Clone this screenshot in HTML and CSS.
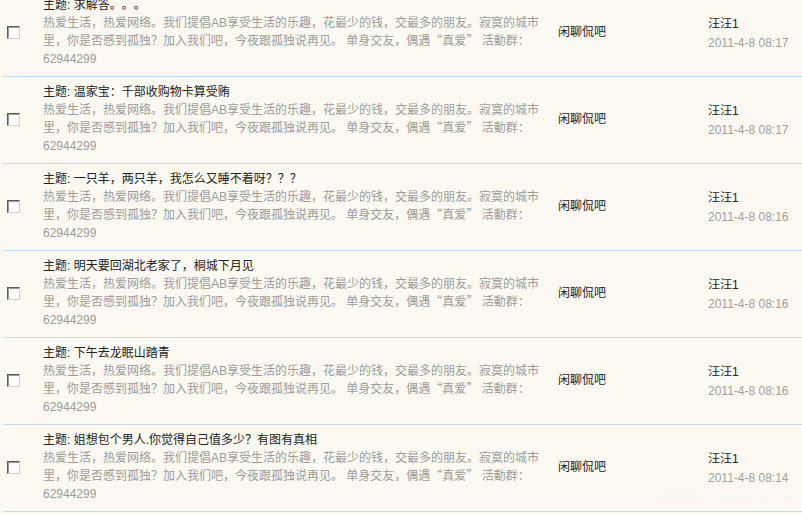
FILE: index.html
```html
<!DOCTYPE html>
<html lang="zh-CN">
<head>
  <meta charset="UTF-8" />
  <title>帖子列表</title>
  <link rel="stylesheet" href="styles.css">
</head>

<body>
  <div class="lista">
    <table class="tabla">
      <colgroup>
        <col class="c-check">
        <col class="c-tema">
        <col class="c-foro">
        <col class="c-autor">
      </colgroup>
      <tbody>
        <tr>
          <td class="sel"><input type="checkbox"></td>
          <td class="tema">
            <div class="titulo">主题: 求解答<span class="p">。</span><span class="p">。</span><span class="p">。</span></div>
            <div class="desc">热爱生活，热爱网络。我们提倡AB享受生活的乐趣，花最少的钱，交最多的朋友。寂寞的城市里，你是否感到孤独？加入我们吧，今夜跟孤独说再见。 单身交友，偶遇<span class="q">“</span>真爱<span class="q">”</span> 活動群：62944299</div>
          </td>
          <td class="foro">闲聊侃吧</td>
          <td class="autor"><div class="nombre">汪汪1</div><div class="fecha">2011-4-8 08:17</div></td>
        </tr>
        <tr>
          <td class="sel"><input type="checkbox"></td>
          <td class="tema">
            <div class="titulo">主题: 温家宝：千部收购物卡算受贿</div>
            <div class="desc">热爱生活，热爱网络。我们提倡AB享受生活的乐趣，花最少的钱，交最多的朋友。寂寞的城市里，你是否感到孤独？加入我们吧，今夜跟孤独说再见。 单身交友，偶遇<span class="q">“</span>真爱<span class="q">”</span> 活動群：62944299</div>
          </td>
          <td class="foro">闲聊侃吧</td>
          <td class="autor"><div class="nombre">汪汪1</div><div class="fecha">2011-4-8 08:17</div></td>
        </tr>
        <tr>
          <td class="sel"><input type="checkbox"></td>
          <td class="tema">
            <div class="titulo">主题: 一只羊，两只羊，我怎么又睡不着呀？？？</div>
            <div class="desc">热爱生活，热爱网络。我们提倡AB享受生活的乐趣，花最少的钱，交最多的朋友。寂寞的城市里，你是否感到孤独？加入我们吧，今夜跟孤独说再见。 单身交友，偶遇<span class="q">“</span>真爱<span class="q">”</span> 活動群：62944299</div>
          </td>
          <td class="foro">闲聊侃吧</td>
          <td class="autor"><div class="nombre">汪汪1</div><div class="fecha">2011-4-8 08:16</div></td>
        </tr>
        <tr>
          <td class="sel"><input type="checkbox"></td>
          <td class="tema">
            <div class="titulo">主题: 明天要回湖北老家了，桐城下月见</div>
            <div class="desc">热爱生活，热爱网络。我们提倡AB享受生活的乐趣，花最少的钱，交最多的朋友。寂寞的城市里，你是否感到孤独？加入我们吧，今夜跟孤独说再见。 单身交友，偶遇<span class="q">“</span>真爱<span class="q">”</span> 活動群：62944299</div>
          </td>
          <td class="foro">闲聊侃吧</td>
          <td class="autor"><div class="nombre">汪汪1</div><div class="fecha">2011-4-8 08:16</div></td>
        </tr>
        <tr>
          <td class="sel"><input type="checkbox"></td>
          <td class="tema">
            <div class="titulo">主题: 下午去龙眠山踏青</div>
            <div class="desc">热爱生活，热爱网络。我们提倡AB享受生活的乐趣，花最少的钱，交最多的朋友。寂寞的城市里，你是否感到孤独？加入我们吧，今夜跟孤独说再见。 单身交友，偶遇<span class="q">“</span>真爱<span class="q">”</span> 活動群：62944299</div>
          </td>
          <td class="foro">闲聊侃吧</td>
          <td class="autor"><div class="nombre">汪汪1</div><div class="fecha">2011-4-8 08:16</div></td>
        </tr>
        <tr>
          <td class="sel"><input type="checkbox"></td>
          <td class="tema">
            <div class="titulo">主题: 姐想包个男人.你觉得自己值多少？有图有真相</div>
            <div class="desc">热爱生活，热爱网络。我们提倡AB享受生活的乐趣，花最少的钱，交最多的朋友。寂寞的城市里，你是否感到孤独？加入我们吧，今夜跟孤独说再见。 单身交友，偶遇<span class="q">“</span>真爱<span class="q">”</span> 活動群：62944299</div>
          </td>
          <td class="foro">闲聊侃吧</td>
          <td class="autor"><div class="nombre">汪汪1</div><div class="fecha">2011-4-8 08:14</div></td>
        </tr>
      </tbody>
    </table>
    <div class="marca">桐城网 <span>itongcheng.com</span></div>
  </div>
</body>
</html>
```

FILE: styles.css
```css
body {
  margin: 0;
  padding: 0;
  background-color: #fbf9f1;
  font-family: 'Liberation Sans', 'Noto Sans CJK SC', sans-serif;
  font-size: 12px;
  color: #222;
  overflow: hidden;
}

.lista {
  position: relative;
  height: 514px;
  overflow: hidden;
}

.tabla {
  width: 799px;
  margin: -10px 0 0 3px;
  border-collapse: collapse;
  table-layout: fixed;
}

.c-check { width: 40px; }
.c-tema { width: 515px; }
.c-foro { width: 150px; }
.c-autor { width: 94px; }

.tabla td {
  padding: 6px 0 8px;
  border-bottom: 1px solid #c6dbe9;
  vertical-align: middle;
  line-height: 18px;
}

.sel {
  padding-left: 4px !important;
}

.sel input {
  appearance: none;
  -webkit-appearance: none;
  display: block;
  width: 13px;
  height: 13px;
  margin: 0;
  background: #fff;
  border: 1px solid;
  border-color: #5a5a5a #d4d0c8 #d4d0c8 #5a5a5a;
  box-shadow: inset 1px 1px 0 #9a9a9a;
  box-sizing: border-box;
}

.tema {
  padding-right: 15px !important;
}

.titulo {
  color: #222;
}

.p {
  display: inline-block;
  width: 12px;
  line-height: 12px;
}

.desc {
  width: 500px;
  color: #9c9c9c;
}

.q {
  font-family: 'Noto Sans CJK SC', sans-serif;
  line-height: 12px;
}

.foro {
  color: #222;
}

.autor {
  padding-top: 10px !important;
}

.nombre {
  color: #222;
  line-height: 19px;
}

.fecha {
  color: #a0a0a0;
  line-height: 19px;
}

.marca {
  position: absolute;
  right: 6px;
  bottom: 10px;
  color: rgba(255, 255, 255, 0.9);
  font-family: 'Noto Sans CJK SC', serif;
  font-size: 14px;
  text-shadow: 0 0 1px rgba(200, 200, 200, 0.3);
}

.marca span {
  font-family: 'Liberation Mono', monospace;
  font-size: 11px;
}
```
